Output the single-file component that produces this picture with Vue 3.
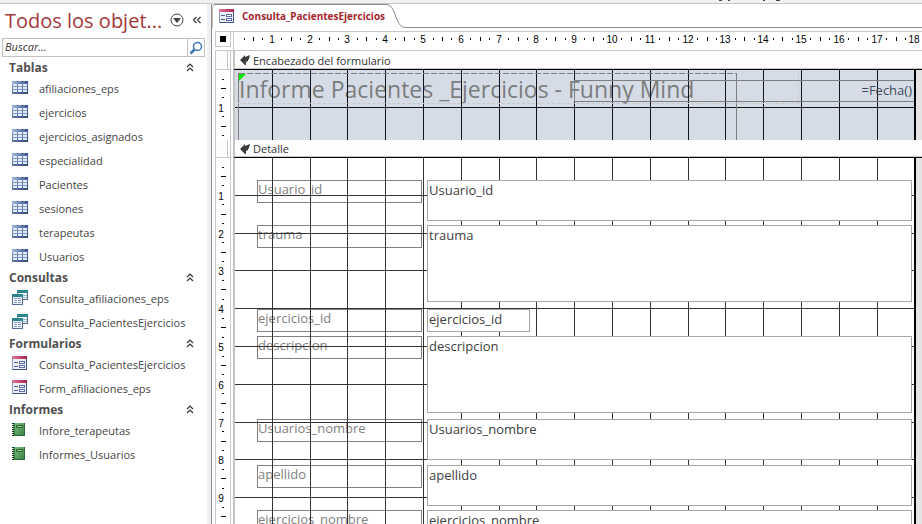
<script setup>
import { ref } from 'vue'

const CM = 37.795
const at = (n) => Math.floor(n * CM - 0.4)
const centimetres = Array.from({ length: 18 }, (_, i) => i + 1)

const groups = ref([
  {
    name: 'Tablas', icon: 'table', open: true,
    items: ['afiliaciones_eps', 'ejercicios', 'ejercicios_asignados', 'especialidad', 'Pacientes', 'sesiones', 'terapeutas', 'Usuarios']
  },
  { name: 'Consultas', icon: 'query', open: true, items: ['Consulta_afiliaciones_eps', 'Consulta_PacientesEjercicios'] },
  { name: 'Formularios', icon: 'form', open: true, items: ['Consulta_PacientesEjercicios', 'Form_afiliaciones_eps'] },
  { name: 'Informes', icon: 'report', open: true, items: ['Infore_terapeutas', 'Informes_Usuarios'] }
])

const search = ref('')

// Positions on the form design surface, measured from the section's corner.
const fields = [
  { name: 'Usuario_id', top: 22, width: 485, height: 41 },
  { name: 'trauma', top: 67, width: 485, height: 77 },
  { name: 'ejercicios_id', top: 151, width: 103, height: 23 },
  { name: 'descripcion', top: 178, width: 485, height: 77 },
  { name: 'Usuarios_nombre', top: 261, width: 485, height: 41 },
  { name: 'apellido', top: 307, width: 485, height: 41 },
  { name: 'ejercicios_nombre', top: 352, width: 485, height: 41 }
]
</script>

<template>
  <div class="app">
    <svg class="defs" width="0" height="0" aria-hidden="true">
      <defs>
        <linearGradient id="blueBar" x1="0" y1="0" x2="1" y2="0">
          <stop offset="0" stop-color="#9fb8e0" /><stop offset="1" stop-color="#3a5596" />
        </linearGradient>
        <linearGradient id="blueFrame" x1="0" y1="0" x2="1" y2="1">
          <stop offset="0" stop-color="#8fa8d6" /><stop offset="1" stop-color="#2f4679" />
        </linearGradient>
        <linearGradient id="pinkBar" x1="0" y1="0" x2="1" y2="0">
          <stop offset="0" stop-color="#e0789a" /><stop offset="1" stop-color="#a82452" />
        </linearGradient>
        <linearGradient id="greenBook" x1="0" y1="0" x2="1" y2="1">
          <stop offset="0" stop-color="#7fc084" /><stop offset="1" stop-color="#38803f" />
        </linearGradient>
        <symbol id="icon-table" viewBox="0 0 16 16">
          <rect x="0" y="2" width="16" height="13" fill="url(#blueFrame)" />
          <rect x="0" y="2" width="16" height="3" fill="url(#blueBar)" />
          <path d="M1 5h4v2H1zM6 5h4v2H6zM11 5h4v2h-4zM1 8h4v2H1zM6 8h4v2H6zM11 8h4v2h-4zM1 11h4v2H1zM6 11h4v2H6zM11 11h4v2h-4z" fill="#e6eefb" />
          <path d="M1 7.500h14M1 10.500h14" stroke="#7d96c8" />
        </symbol>
        <symbol id="icon-query" viewBox="0 0 16 16">
          <rect x="5.500" y="1.500" width="10" height="9" fill="#f2f6fc" stroke="#54698f" />
          <rect x="5" y="1" width="11" height="3" fill="#2a858c" />
          <path d="M11 6.500h4M11 8.500h4" stroke="#9bb4d8" />
          <rect x=".5" y="5.500" width="10" height="10" fill="#f2f6fc" stroke="#54698f" />
          <rect x="0" y="5" width="11" height="3" fill="#2a858c" />
          <path d="M2 9.500h3M6 9.500h3M2 11.500h3M6 11.500h3M2 13.500h3M6 13.500h3" stroke="#7f9bc8" />
        </symbol>
        <symbol id="icon-form" viewBox="0 0 16 16">
          <rect x=".5" y="1.500" width="14" height="13" fill="#eceff8" stroke="#8d9bc0" />
          <path d="M14.500 4v10.500H1" fill="none" stroke="#3d5187" />
          <rect x="0" y="1" width="15" height="3" fill="url(#pinkBar)" />
          <path d="M2 7.500h4M2 11.500h4" stroke="#4a5c8e" />
          <rect x="7.500" y="6.500" width="5" height="2" fill="#fff" stroke="#5a6fa6" />
          <rect x="7.500" y="10.500" width="5" height="2" fill="#fff" stroke="#5a6fa6" />
        </symbol>
        <symbol id="icon-report" viewBox="0 0 16 16">
          <rect x="1" y="2" width="12" height="13" fill="url(#greenBook)" />
          <path d="M1 14.500h11.500V2" fill="none" stroke="#2b6633" />
          <rect x="4.500" y="4.500" width="6" height="2" fill="#8cc78f" stroke="#2b6633" />
          <path d="M1 2v13" stroke="#1e3322" stroke-width="2" stroke-dasharray="1 1" />
          <path d="M2.500 2v13" stroke="#3e8347" />
        </symbol>
      </defs>
    </svg>

    <div class="ribbon-edge">
      <svg width="62" height="2" aria-hidden="true">
        <path d="M0 .5h3M9 .5h2M44 .5h2M57 .5h4" stroke="#444" />
      </svg>
    </div>

    <div class="workspace">
      <nav class="sidebar">
        <header class="side-title">
          <h1>Todos los objet...</h1>
          <button class="icon-button" aria-label="Menú">
            <svg width="14" height="14"><circle cx="7" cy="7" r="6" fill="none" stroke="#444" /><path d="M3 5h8L7 10z" fill="#444" /></svg>
          </button>
          <button class="icon-button" aria-label="Contraer panel">
            <svg width="10" height="8"><path d="M4.500 1L1.500 4l3 3M8.500 1l-3 3 3 3" fill="none" stroke="#333" stroke-width="1.200" /></svg>
          </button>
        </header>

        <form class="search" @submit.prevent>
          <input v-model="search" type="text" placeholder="Buscar..." aria-label="Buscar">
          <button aria-label="Buscar">
            <svg width="14" height="14"><circle cx="8.500" cy="5.500" r="4" fill="none" stroke="#3d74b8" stroke-width="1.500" /><path d="M5.500 8.500L1.500 12.500" stroke="#3d74b8" stroke-width="2.500" /></svg>
          </button>
        </form>

        <section v-for="group in groups" :key="group.name">
          <button class="group" @click="group.open = !group.open">
            <span>{{ group.name }}</span>
            <svg width="8" height="9"><path d="M1 4l3-3 3 3M1 8l3-3 3 3" fill="none" stroke="#333" stroke-width="1.200" /></svg>
          </button>
          <ul v-if="group.open">
            <li v-for="item in group.items" :key="item">
              <a href="#">
                <svg width="16" height="16"><use :href="'#icon-' + group.icon" /></svg>
                <span>{{ item }}</span>
              </a>
            </li>
          </ul>
        </section>
      </nav>

      <div class="splitter"></div>

      <main class="document">
        <div class="tabs">
          <a class="tab" href="#">
            <svg width="16" height="16"><use href="#icon-form" /></svg>
            <span>Consulta_PacientesEjercicios</span>
          </a>
          <svg class="tab-slope" width="18" height="24"><path d="M0 .5C9 .500 8 23.500 18 23.500" fill="none" stroke="#8c8c8c" /></svg>
          <div class="tab-rest"></div>
        </div>

        <div class="ruler-row">
          <div class="corner"><span></span></div>
          <svg class="ruler-x" height="18">
            <g v-for="n in centimetres" :key="n">
              <rect :x="at(n - 0.75)" y="6" width="1" height="2" />
              <rect :x="at(n - 0.5)" y="5" width="1" height="4" />
              <rect :x="at(n - 0.25)" y="6" width="1" height="2" />
              <text :x="at(n)" y="11">{{ n }}</text>
            </g>
          </svg>
        </div>

        <section class="band band-header">
          <div class="selector"></div>
          <h2 class="bar">
            <svg width="10" height="10"><path d="M0 5l5-5v2l5-2-1 4-1 1v1L6 7v3H5z" fill="#3c3c3c" /></svg>
            Encabezado del formulario
          </h2>
          <svg class="ruler-y">
            <g v-for="n in 2" :key="n">
              <rect x="6" :y="at(n - 0.75)" width="2" height="1" />
              <rect x="5" :y="at(n - 0.5)" width="5" height="1" />
              <rect x="6" :y="at(n - 0.25)" width="2" height="1" />
              <text v-if="n < 2" x="5" :y="at(n) + 5">{{ n }}</text>
            </g>
          </svg>
          <div class="surface surface-header">
            <div class="page">
              <p class="form-title">Informe Pacientes _Ejercicios - Funny Mind</p>
              <svg class="grid">
                <path v-for="n in 17" :key="n" :d="`M${at(n)}.5 0V70`" />
                <path d="M0 37.500H680" />
              </svg>
              <div class="title-frame"></div>
              <div class="placeholder-frame"></div>
              <input class="date" type="text" value="=Fecha()" aria-label="Fecha" readonly>
              <svg class="flag" width="7" height="7"><path d="M0 0h7L0 7z" fill="#00f000" /></svg>
            </div>
          </div>
        </section>

        <section class="band band-detail">
          <div class="selector"></div>
          <h2 class="bar">
            <svg width="10" height="10"><path d="M0 5l5-5v2l5-2-1 4-1 1v1L6 7v3H5z" fill="#3c3c3c" /></svg>
            Detalle
          </h2>
          <svg class="ruler-y">
            <g v-for="n in 10" :key="n">
              <rect x="6" :y="at(n - 0.75)" width="2" height="1" />
              <rect x="5" :y="at(n - 0.5)" width="5" height="1" />
              <rect x="6" :y="at(n - 0.25)" width="2" height="1" />
              <text v-if="n < 10" x="5" :y="at(n) + 5">{{ n }}</text>
            </g>
          </svg>
          <div class="surface">
            <div class="page">
              <label
                v-for="field in fields" :key="field.name" class="field-label"
                :for="'f-' + field.name" :style="{ top: field.top + 'px' }"
              >{{ field.name }}</label>
              <svg class="grid">
                <path v-for="n in 17" :key="'v' + n" :d="`M${at(n)}.5 0V700`" />
                <path v-for="n in 17" :key="'h' + n" :d="`M0 ${at(n)}.5H680`" />
              </svg>
              <textarea
                v-for="field in fields" :id="'f-' + field.name" :key="'b-' + field.name"
                class="field-box" readonly :value="field.name"
                :style="{ top: field.top + 'px', width: field.width + 'px', height: field.height + 'px' }"
              ></textarea>
            </div>
          </div>
        </section>
      </main>
    </div>
  </div>
</template>

<style>
body {
  background: #fff;
  overflow: hidden;
}
</style>

<style scoped>
.app {
  display: flex;
  flex-direction: column;
  height: 100vh;
  font-family: "Open Sans", "Noto Sans", sans-serif;
  font-size: 12px;
  color: #444;
}
.app *, .app *::before { box-sizing: border-box; }
.defs { position: absolute; }
svg { display: block; flex: none; }
button, input, textarea { font: inherit; color: inherit; border: 0; margin: 0; padding: 0; background: none; outline: 0; }
a { color: inherit; text-decoration: none; }
h1, h2, p, ul { margin: 0; padding: 0; list-style: none; font-weight: 400; }

.ribbon-edge {
  display: flex;
  justify-content: flex-end;
  flex: none;
  height: 4px;
  padding-right: 141px;
  background: #f1f1f1;
  border-bottom: 1px solid #c8c8c8;
}
.workspace { display: flex; flex: 1; min-height: 0; }

.sidebar { flex: none; width: 207px; padding-right: 2px; }
.side-title { display: flex; align-items: center; height: 34px; padding-left: 5px; }
.side-title h1 { flex: 1; font-size: 20px; line-height: 34px; color: #a4373a; white-space: nowrap; }
.icon-button { display: flex; padding: 0 3px 0 5px; }
.side-title .icon-button { margin-bottom: 2px; }
.search { display: flex; height: 19px; margin-left: 2px; border: 1px solid #c0c0c0; }
.search input { flex: 1; min-width: 0; padding-left: 2px; padding-bottom: 2px; font-size: 11px; font-style: italic; }
.search input::placeholder { color: #333; opacity: 1; }
.search button { display: flex; align-items: center; justify-content: center; width: 17px; border-left: 1px solid #c0c0c0; }
.sidebar section:first-of-type { padding-top: 1px; }
.group {
  display: flex;
  align-items: center;
  justify-content: space-between;
  width: 100%;
  height: 18px;
  padding: 0 11px 0 9px;
  font-size: 12px;
  font-weight: 700;
  color: #505050;
}
.sidebar li a { display: flex; align-items: center; gap: 11px; height: 24px; padding-left: 12px; font-size: 11px; white-space: nowrap; }
.sidebar li svg { margin-bottom: 2px; }

.splitter { flex: none; width: 5px; background: #eff0f2; border-right: 1px solid #858d96; }

.document { display: flex; flex-direction: column; flex: 1; min-width: 0; }
.tabs { display: flex; flex: none; height: 24px; }
.tab {
  display: flex;
  align-items: center;
  gap: 7px;
  padding: 0 2px 2px 6px;
  border: solid #8c8c8c;
  border-width: 1px 0 0 1px;
  border-left-color: #d8c0a8;
  border-top-left-radius: 4px;
  font-size: 10px;
  font-weight: 700;
  color: #a4262c;
  white-space: nowrap;
}
.tab-rest { flex: 1; border-bottom: 1px solid #8c8c8c; }

.ruler-row { display: flex; flex: none; height: 20px; margin: 3px 0 0 3px; border-top: 1px solid #c8c8c8; border-bottom: 1px solid #c8c8c8; }
.corner { display: grid; place-items: center; width: 16px; height: 15px; border: solid #c8c8c8; border-width: 0 1px 1px; }
.corner span { width: 6px; height: 6px; background: #000; }
.ruler-x { flex: 1; min-width: 0; margin-left: 2px; padding-left: 1px; border-left: 1px solid #c8c8c8; overflow: hidden; }
.ruler-x text, .ruler-y text { font-family: "Liberation Sans", sans-serif; font-size: 10px; text-anchor: middle; fill: #000; }

.band { display: grid; grid-template-columns: 16px 1fr; column-gap: 2px; flex: none; margin-left: 3px; }
.band-header { grid-template-rows: 19px 70px; }
.band-detail { grid-template-rows: 18px 1fr; flex: 1; min-height: 0; }
.selector { border: solid #c8c8c8; border-width: 0 1px 1px; box-shadow: inset -2px 0 #fff, inset -3px 0 #c8c8c8; background: #fcfcfc; }
.bar {
  display: flex;
  align-items: center;
  gap: 3px;
  padding-left: 5px;
  border-left: 2px solid #c4c4c4;
  border-bottom: 1px solid #000;
  background: #fdfdfd;
  box-shadow: inset 0 -1px #c8c8c8;
  font-size: 11px;
  color: #333;
}
.ruler-y { width: 16px; height: 100%; border: solid #c8c8c8; border-width: 0 1px; overflow: hidden; }
.surface { min-width: 0; background: #e5e3e5; border-left: 2px solid #c4c4c4; overflow: hidden; }
.page { position: relative; width: 681px; height: 100%; background: #fff; border-right: 2px solid #000; overflow: hidden; }
.surface-header .page { background: #d5dce6; }
.grid { position: absolute; inset: 0; width: 100%; height: 100%; stroke: #333; }
.surface-header .grid { stroke: #10141e; }

.form-title { position: absolute; left: 4px; top: 3px; font-size: 23px; line-height: 33px; color: #7c7c7c; white-space: nowrap; }
.title-frame { position: absolute; left: 3px; top: 3px; width: 499px; height: 67px; border: solid #7f7f7f; border-width: 0 1px; }
.title-frame::before { content: ""; display: block; height: 1px; background: repeating-linear-gradient(90deg, #7f7f7f 0 6px, transparent 6px 8px); }
.placeholder-frame { position: absolute; left: 3px; top: 3px; width: 561px; height: 31px; border: 1px dashed #c9c9cb; border-left: 0; border-top: 0; }
.date { position: absolute; left: 339px; top: 10px; width: 341px; height: 22px; padding: 0 2px 2px 0; border: 1px solid #7f7f7f; font-size: 13px; text-align: right; color: #3f4a5c; }
.flag { position: absolute; left: 4px; top: 4px; }
.field-label { position: absolute; left: 22px; width: 165px; height: 23px; border: 1px solid #7f7f7f; font-size: 13px; line-height: 16px; color: #7f7f7f; }
.field-box { position: absolute; left: 192px; padding: 1px; border: 1px solid #a6a6a6; background: #fff; font-size: 13px; line-height: 16px; color: #404040; resize: none; overflow: hidden; }
</style>
